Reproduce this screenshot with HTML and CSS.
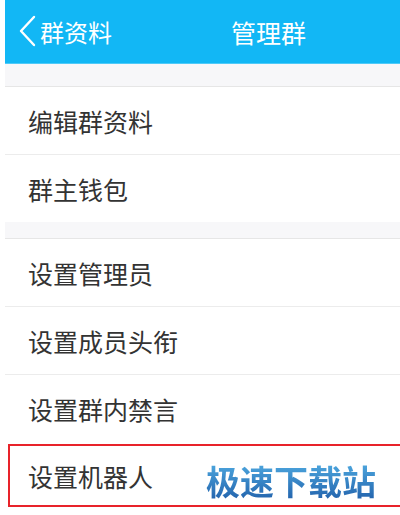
FILE: index.html
```html
<!DOCTYPE html>
<html lang="zh-CN">
<head>
    <meta charset="UTF-8">
    <meta name="viewport" content="width=device-width, initial-scale=1.0">
    <title>管理群</title>
    <link rel="stylesheet" href="styles.css">
</head>
<body>
    <div class="page">
        <div class="nav">
            <div class="back">
                <svg class="chevron" width="18" height="32" viewBox="0 0 18 32">
                    <path d="M16 2 L3 16 L16 30" fill="none" stroke="#fff" stroke-width="2.4" stroke-linecap="round" stroke-linejoin="round"/>
                </svg>
                <span>群资料</span>
            </div>
            <div class="title">管理群</div>
        </div>

        <div class="gap gap-top"></div>
        <div class="row">编辑群资料</div>
        <div class="row row-end">群主钱包</div>

        <div class="gap"></div>
        <div class="row">设置管理员</div>
        <div class="row">设置成员头衔</div>
        <div class="row row-end">设置群内禁言</div>
        <div class="row row-marked">
            设置机器人
            <span class="watermark">极速下载站</span>
        </div>
    </div>
</body>
</html>
```

FILE: styles.css
```css
body {
    margin: 0;
    background: #fff;
    font-family: "Noto Sans CJK SC", "Noto Sans", sans-serif;
    overflow: hidden;
}
.page {
    padding-left: 5px;
    height: 515px;
    overflow: hidden;
}
.nav {
    height: 63px;
    background: #12b7f5;
    border-bottom: 1px solid #4fcaf8;
    display: flex;
    align-items: center;
    color: #fff;
}
.back {
    display: flex;
    align-items: center;
    padding-left: 13px;
    font-size: 24px;
    width: 210px;
}
.chevron {
    margin-right: 4px;
    margin-top: -2px;
}
.title {
    font-size: 25px;
    padding-left: 3px;
}
.gap {
    height: 16px;
    background: #f7f7f9;
    border-bottom: 1px solid #e6e6e6;
}
.gap-top {
    height: 22px;
}
.row {
    height: 67px;
    display: flex;
    align-items: center;
    padding-left: 23px;
    font-size: 25px;
    color: #333;
    border-bottom: 1px solid #ececec;
}
.row-end {
    border-bottom: none;
}
.row-marked {
    position: relative;
    height: 59px;
    margin: 2px -20px 0 3px;
    padding-left: 18px;
    border: 2px solid #e8232a;
}
.watermark {
    position: absolute;
    left: 196px;
    top: 10px;
    font-size: 34px;
    font-weight: bold;
    background: linear-gradient(to bottom, #55b4e8, #1d5aa6);
    -webkit-background-clip: text;
    background-clip: text;
    color: transparent;
}
```
